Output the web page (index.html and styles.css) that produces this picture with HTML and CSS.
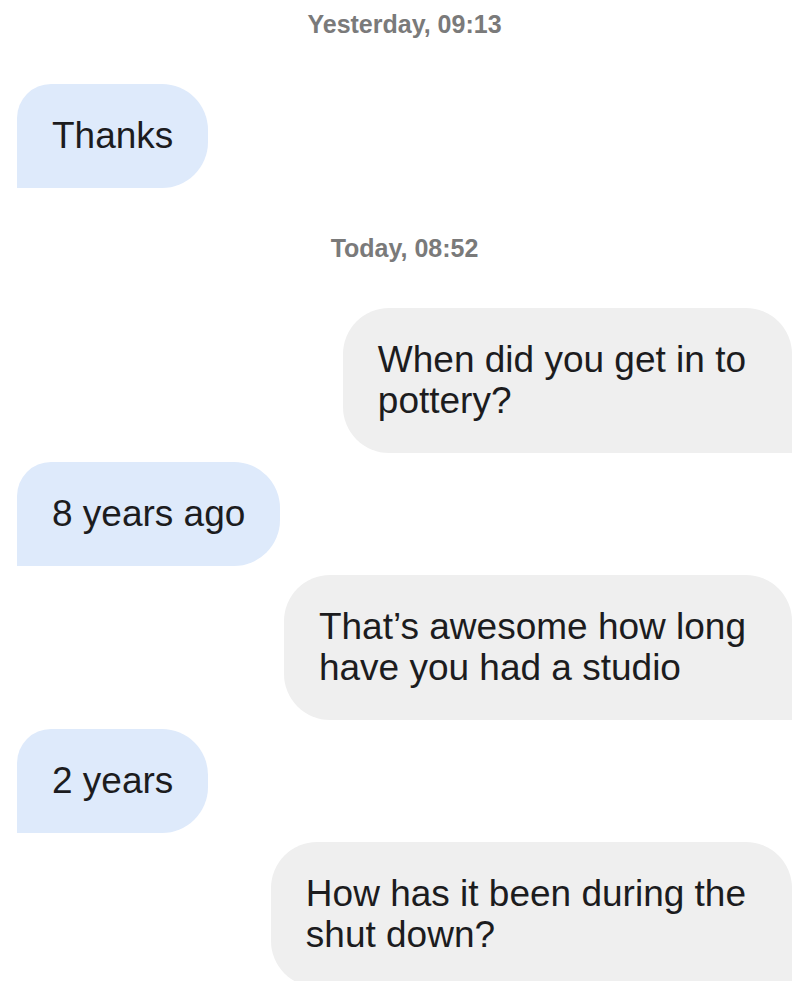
FILE: index.html
```html
<!DOCTYPE html>
<html>
<head>
<meta charset="utf-8">
<link rel="stylesheet" href="styles.css">
</head>
<body>
<div class="chat">
  <div class="stamp stamp-first">Yesterday, 09:13</div>
  <div class="bubble in">Thanks</div>
  <div class="stamp">Today, 08:52</div>
  <div class="bubble out">When did you get in to<br>pottery?</div>
  <div class="bubble in">8 years ago</div>
  <div class="bubble out">That’s awesome how long<br>have you had a studio</div>
  <div class="bubble in">2 years</div>
  <div class="bubble out">How has it been during the<br>shut down?</div>
</div>
</body>
</html>
```
FILE: styles.css
```css
html, body {
  margin: 0;
  padding: 0;
  background: #ffffff;
}
.chat {
  display: flex;
  flex-direction: column;
  padding: 10px 8px 0 17px;
  font-family: "Liberation Sans", Arial, sans-serif;
}
.stamp {
  align-self: center;
  font-size: 25px;
  line-height: 28px;
  font-weight: bold;
  color: #7a7a7a;
  margin: 48px 0 46px;
}
.stamp-first {
  margin: 0 0 46px;
}
.bubble {
  font-size: 37px;
  line-height: 41px;
  color: #1c1c1e;
  padding: 31px 35px 32px 35px;
  margin-bottom: 9px;
}
.in {
  align-self: flex-start;
  background: #deeafb;
  border-radius: 34px 46px 46px 0;
}
.out {
  align-self: flex-end;
  background: #efefef;
  padding-right: 46px;
  border-radius: 46px 46px 0 46px;
}
.chat > .bubble.in + .stamp {
  margin-top: 37px;
}
```
